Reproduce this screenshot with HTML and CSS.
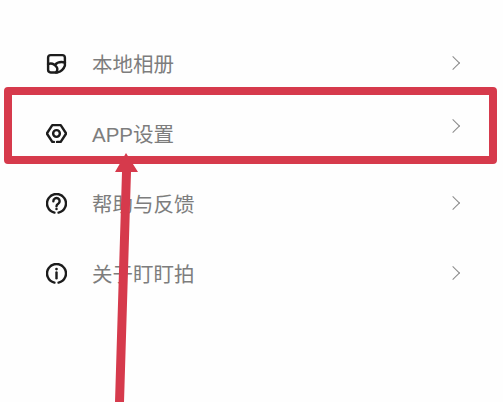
FILE: index.html
```html
<!DOCTYPE html>
<html lang="zh-CN">
  <head>
    <meta charset="UTF-8" />
    <meta name="viewport" content="width=device-width, initial-scale=1.0" />
    <title>设置</title>
    <link rel="stylesheet" href="styles.css">
  </head>
  <body>
    <main class="menu">
      <div class="row">
        <svg class="icon" viewBox="0 0 20 20">
          <path d="M11 18.500H4.500a2.500 2.500 0 0 1-2.500-2.500V4.500A2.500 2.500 0 0 1 4.500 2h11A2.500 2.500 0 0 1 18 4.500v7.500c-1 3-3.500 5.500-7 6.500" />
          <path d="M2 10.500c3.500-1.200 6.500.3 8.500 3.500M8.500 11.500c2-2.800 5.500-3.300 9.500-2.500M10.500 14c.6 1.500.3 3-1 4.500" />
        </svg>
        <span class="label">本地相册</span>
        <span class="chevron"></span>
      </div>
      <div class="row">
        <svg class="icon" viewBox="0 0 20 20">
          <path d="M7.500 18H6L.8 10 6 2h8l5.200 8L14 18H10.500" />
          <circle cx="10" cy="10" r="3.200" />
        </svg>
        <span class="label">APP设置</span>
        <span class="chevron chevron-up"></span>
      </div>
      <div class="row">
        <svg class="icon" viewBox="0 0 20 20">
          <path d="M8 18.700A9 9 0 1 1 12 18.700" />
          <path d="M7 7.800a3 3 0 1 1 4.600 2.500c-1 .6-1.600 1.200-1.600 2.400" />
          <circle class="dot" cx="10" cy="15.300" r="1.200" />
        </svg>
        <span class="label">帮助与反馈</span>
        <span class="chevron"></span>
      </div>
      <div class="row">
        <svg class="icon" viewBox="0 0 20 20">
          <path d="M8 18.700A9 9 0 1 1 12 18.700" />
          <path d="M10 9v5.500" />
          <circle class="dot" cx="10" cy="5.800" r="1.300" />
        </svg>
        <span class="label">关于盯盯拍</span>
        <span class="chevron"></span>
      </div>
    </main>

    <div class="mark-box"></div>
    <svg class="mark-arrow" viewBox="0 0 503 402">
      <path d="M126 153 L138 172 L131 172 L124 402 L115 402 L122 172 L115 172 Z" />
    </svg>
  </body>
</html>
```

FILE: styles.css
```css
* {
  margin: 0;
  padding: 0;
  box-sizing: border-box;
}

body {
  position: relative;
  width: 503px;
  height: 402px;
  overflow: hidden;
  background-color: #fefefe;
  font-family: "Liberation Sans", "Noto Sans CJK SC", sans-serif;
}

.menu {
  display: flex;
  flex-direction: column;
  padding-top: 28px;
  padding-left: 46px;
  padding-right: 40px;
}

.row {
  display: flex;
  align-items: center;
  height: 70px;
}

.icon {
  width: 21px;
  height: 21px;
  margin-right: 25px;
  fill: none;
  stroke: #1c1c1c;
  stroke-width: 2.300;
  stroke-linecap: round;
  stroke-linejoin: round;
}

.icon .dot {
  fill: #1c1c1c;
  stroke: none;
}

.label {
  flex: 1;
  font-size: 20.500px;
  color: #7d7d7d;
}

.chevron {
  width: 10px;
  height: 10px;
  margin-right: 5px;
  border-top: 1.500px solid #8a8a8a;
  border-right: 1.500px solid #8a8a8a;
  transform: rotate(45deg);
}

.chevron-up {
  margin-bottom: 14px;
}

.mark-box {
  position: absolute;
  left: 4px;
  top: 87px;
  width: 493px;
  height: 77px;
  border: 8px solid #d63a4c;
  border-radius: 4px;
}

.mark-arrow {
  position: absolute;
  left: 0;
  top: 0;
  width: 503px;
  height: 402px;
  fill: #d63a4c;
}
```
